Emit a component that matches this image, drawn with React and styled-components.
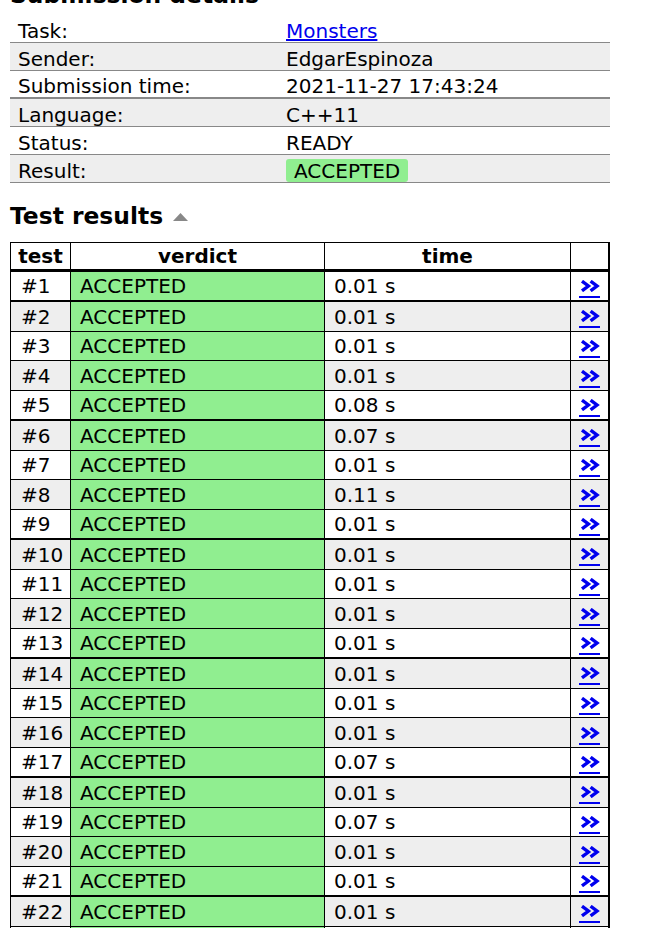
import React from "react";
import styled, { createGlobalStyle } from "styled-components";

const GlobalStyle = createGlobalStyle`
  * { box-sizing: border-box; }
  body {
    margin: 0;
    background: #fff;
    color: #000;
    font-family: Verdana, "DejaVu Sans", sans-serif;
    font-size: 20px;
  }
`;

const Page = styled.div`
  margin-top: -19px;
  padding: 0 10px;
`;

const Title = styled.h2`
  display: flex;
  align-items: center;
  gap: 10px;
  margin: ${({ $first }) => ($first ? "0 0 6px" : "19px 0 12px")};
  font-size: 23.4px;
  line-height: 28px;
  font-weight: bold;
`;

const SortArrow = styled.svg`
  width: 15px;
  height: 8px;
  margin-top: 2px;
`;

const Summary = styled.table`
  width: 600px;
  border-collapse: separate;
  border-spacing: 0;
`;

const SummaryRow = styled.tr`
  background: ${({ $shade }) => ($shade ? "#eee" : "#fff")};
`;

const SummaryCell = styled.td`
  height: 28px;
  padding: 4px 8px 0;
  line-height: 22px;
  border-bottom: ${({ $thick }) => ($thick ? 2 : 1)}px solid #888;
  width: ${({ $label }) => ($label ? "268px" : "auto")};
  white-space: nowrap;
`;

const TaskLink = styled.a`
  color: #00e;
  text-decoration: underline;
`;

const Badge = styled.span`
  display: inline-block;
  padding: 1px 8px 0;
  line-height: 22px;
  border-radius: 3px;
  background: #90ee90;
`;

const Results = styled.table`
  width: 600px;
  table-layout: fixed;
  border-collapse: separate;
  border-spacing: 0;
  border-top: 1px solid #000;
  border-left: 1px solid #000;
  border-right: 2px solid #000;
`;

const HeadCell = styled.th`
  width: ${({ $w }) => $w}px;
  height: 29px;
  padding: 0;
  line-height: 22px;
  text-align: center;
  font-weight: bold;
  border-bottom: 3px solid #000;
  border-right: ${({ $last }) => ($last ? "none" : "1px solid #000")};
`;

const ResultRow = styled.tr`
  background: ${({ $shade }) => ($shade ? "#eee" : "#fff")};
`;

const Cell = styled.td`
  height: 29.75px;
  padding: 2px 0 0 ${({ $pad }) => $pad ?? 9}px;
  line-height: 23px;
  border-bottom: ${({ $thick }) => ($thick ? 2 : 1)}px solid #000;
  border-right: ${({ $last }) => ($last ? "none" : "1px solid #000")};
  background: ${({ $ok }) => ($ok ? "#90ee90" : "transparent")};
  text-align: ${({ $center }) => ($center ? "center" : "left")};
  white-space: nowrap;
  overflow: hidden;
`;

const ViewLink = styled.a`
  display: inline-flex;
  flex-direction: column;
  align-items: center;
  width: 21px;
  padding-top: 2px;
  padding-bottom: 4px;
  color: #00e;
  vertical-align: middle;
  border-bottom: 2px solid #00e;
`;

const Chevrons = () => (
  <svg width="20" height="12" viewBox="0 0 20 12">
    <path d="M2 1.2 L8.4 6 L2 10.8 M10.6 1.2 L17 6 L10.6 10.8" fill="none" stroke="#00e" strokeWidth="3.4" strokeLinejoin="miter" />
  </svg>
);

const details = [
  ["Task:", "link"],
  ["Sender:", "EdgarEspinoza"],
  ["Submission time:", "2021-11-27 17:43:24"],
  ["Language:", "C++11"],
  ["Status:", "READY"],
  ["Result:", "badge"],
];

const times = [
  "0.01", "0.01", "0.01", "0.01", "0.08", "0.07", "0.01", "0.11", "0.01", "0.01", "0.01", "0.01",
  "0.01", "0.01", "0.01", "0.01", "0.07", "0.01", "0.07", "0.01", "0.01", "0.01", "0.01", "0.01",
];

export default function App() {
  return (
    <>
      <GlobalStyle />
      <Page>
        <Title $first>Submission details</Title>
        <Summary>
          <tbody>
            {details.map(([label, value], i) => (
              <SummaryRow key={label} $shade={i % 2 === 1}>
                <SummaryCell $label $thick={i === 2}>{label}</SummaryCell>
                <SummaryCell $thick={i === 2}>
                  {value === "link" ? (
                    <TaskLink href="#">Monsters</TaskLink>
                  ) : value === "badge" ? (
                    <Badge>ACCEPTED</Badge>
                  ) : (
                    value
                  )}
                </SummaryCell>
              </SummaryRow>
            ))}
          </tbody>
        </Summary>

        <Title>
          Test results
          <SortArrow viewBox="0 0 15 8">
            <polygon points="0,8 7.5,0 15,8" fill="#888" />
          </SortArrow>
        </Title>
        <Results>
          <thead>
            <tr>
              <HeadCell $w={60}>test</HeadCell>
              <HeadCell $w={254}>verdict</HeadCell>
              <HeadCell $w={246}>time</HeadCell>
              <HeadCell $w={37} $last></HeadCell>
            </tr>
          </thead>
          <tbody>
            {times.map((t, i) => {
              const thick = i % 4 === 0;
              return (
                <ResultRow key={i} $shade={i % 2 === 1}>
                  <Cell $thick={thick} $pad={10}>#{i + 1}</Cell>
                  <Cell $thick={thick} $ok>ACCEPTED</Cell>
                  <Cell $thick={thick}>{t} s</Cell>
                  <Cell $thick={thick} $last $center $pad={0}>
                    <ViewLink href="#"><Chevrons /></ViewLink>
                  </Cell>
                </ResultRow>
              );
            })}
          </tbody>
        </Results>
      </Page>
    </>
  );
}
